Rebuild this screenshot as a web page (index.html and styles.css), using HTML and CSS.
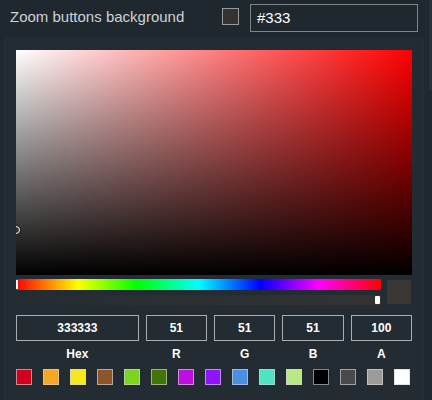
FILE: index.html
```html
<!DOCTYPE html>
<html>
<head>
<meta charset="utf-8">
<link rel="stylesheet" href="styles.css">
</head>
<body>
<div class="row">
  <span class="label">Zoom buttons background</span>
  <span class="chip"></span>
  <div class="text-input">#333</div>
</div>
<div class="panel">
  <div class="saturation">
    <div class="sat-white"></div>
    <div class="sat-black"></div>
    <div class="sat-pointer"></div>
  </div>
  <div class="controls">
    <div class="sliders">
      <div class="hue"><div class="hue-marker"></div></div>
      <div class="alpha"><div class="alpha-marker"></div></div>
    </div>
    <div class="preview"></div>
  </div>
  <div class="fields">
    <div class="field hex"><div class="box">333333</div><div class="flabel">Hex</div></div>
    <div class="field"><div class="box">51</div><div class="flabel">R</div></div>
    <div class="field"><div class="box">51</div><div class="flabel">G</div></div>
    <div class="field"><div class="box">51</div><div class="flabel">B</div></div>
    <div class="field"><div class="box">100</div><div class="flabel">A</div></div>
  </div>
  <div class="swatches">
    <span class="sw" style="background:#d0021b"></span>
    <span class="sw" style="background:#f5a623"></span>
    <span class="sw" style="background:#f8e71c"></span>
    <span class="sw" style="background:#8b572a"></span>
    <span class="sw" style="background:#7ed321"></span>
    <span class="sw" style="background:#417505"></span>
    <span class="sw" style="background:#bd10e0"></span>
    <span class="sw" style="background:#9013fe"></span>
    <span class="sw" style="background:#4a90e2"></span>
    <span class="sw" style="background:#50e3c2"></span>
    <span class="sw" style="background:#b8e986"></span>
    <span class="sw" style="background:#000000"></span>
    <span class="sw" style="background:#4a4a4a"></span>
    <span class="sw" style="background:#9b9b9b"></span>
    <span class="sw" style="background:#ffffff"></span>
  </div>
</div>
<div class="scrollbar"></div>
</body>
</html>
```

FILE: styles.css
```css
html, body {
  margin: 0;
  padding: 0;
  background: #1e282e;
  font-family: "Liberation Sans", Arial, sans-serif;
  height: 400px;
  overflow: hidden;
}
.row {
  display: flex;
  align-items: center;
  height: 36px;
  padding-left: 10px;
}
.label {
  color: #cfd3d6;
  font-size: 15px;
  width: 212px;
  margin-top: -4px;
}
.chip {
  width: 15px;
  height: 15px;
  border: 1px solid #9a9a9a;
  background: #333;
  margin-right: 11px;
  margin-top: -3px;
}
.text-input {
  width: 160px;
  height: 26px;
  border: 1px solid #7d8589;
  color: #fff;
  font-size: 15px;
  line-height: 26px;
  padding-left: 6px;
  box-sizing: content-box;
}
.panel {
  margin: 2px 8px 0 4px;
  background: #222c32;
  border: 1px solid #253036;
  border-radius: 3px;
  padding: 11px 11px 20px 11px;
}
.saturation {
  position: relative;
  height: 225px;
  background: #f00;
  overflow: hidden;
}
.sat-white {
  position: absolute;
  inset: 0;
  background: linear-gradient(to right, #fff, rgba(255,255,255,0));
}
.sat-black {
  position: absolute;
  inset: 0;
  background: linear-gradient(to top, #000, rgba(0,0,0,0));
}
.sat-pointer {
  position: absolute;
  left: -4px;
  top: 176px;
  width: 6px;
  height: 6px;
  border-radius: 50%;
  border: 1.5px solid #fff;
  box-shadow: 0 0 1px 1px rgba(0,0,0,0.4);
}
.controls {
  display: flex;
  gap: 6px;
  margin-top: 4px;
}
.sliders {
  width: 365px;
  display: flex;
  flex-direction: column;
  gap: 5px;
}
.hue {
  position: relative;
  height: 11px;
  background: linear-gradient(to right, #f00 0%, #ff0 17%, #0f0 33%, #0ff 50%, #00f 67%, #f0f 83%, #f00 100%);
}
.hue-marker {
  position: absolute;
  left: 0;
  top: 1px;
  width: 2px;
  height: 9px;
  background: #fff;
}
.alpha {
  position: relative;
  height: 10px;
  background: linear-gradient(to right, rgba(51,51,51,0.15), #333);
}
.alpha-marker {
  position: absolute;
  right: 1px;
  top: 1px;
  width: 5px;
  height: 8px;
  background: #fff;
  border-radius: 1px;
}
.preview {
  width: 24px;
  height: 24px;
  margin-top: 1px;
  background: #393634;
}
.fields {
  display: flex;
  gap: 7px;
  margin-top: 10px;
}
.field {
  flex: 1;
  display: flex;
  flex-direction: column;
}
.field.hex {
  flex: 2;
}
.box {
  height: 24px;
  border: 1px solid #a7adb0;
  color: #fff;
  font-size: 12px;
  font-weight: bold;
  text-align: center;
  line-height: 24px;
}
.flabel {
  color: #fff;
  font-size: 12px;
  font-weight: bold;
  text-align: center;
  margin-top: 6px;
  line-height: 14px;
}
.swatches {
  display: flex;
  gap: 11px;
  margin-top: 8px;
}
.sw {
  width: 14px;
  height: 14px;
  border: 1px solid rgba(210,210,210,0.65);
}
.scrollbar {
  position: absolute;
  right: 0;
  top: 0;
  width: 3px;
  height: 90px;
  background: #263238;
}
```
